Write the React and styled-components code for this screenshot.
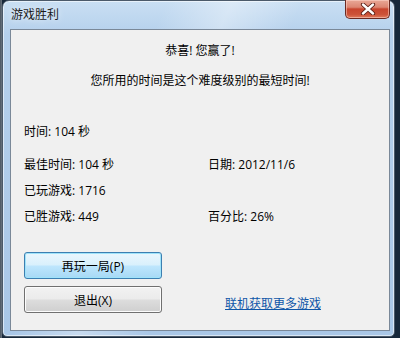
import React from 'react';
import styled, { createGlobalStyle } from 'styled-components';

const GlobalStyle = createGlobalStyle`
    html, body {
        margin: 0;
        padding: 0;
        background: #17283a;
    }
    body {
        width: 400px;
        height: 338px;
        overflow: hidden;
        font-family: "Open Sans", "Noto Sans CJK SC", sans-serif;
    }
`;

const Desktop = styled.div`
    width: 400px;
    height: 338px;
    display: flex;
    align-items: flex-start;
    background: linear-gradient(90deg, #4a5560 0, #6a7480 2px, #17283a 2px);
`;

const Window = styled.div`
    width: 393px;
    height: 337px;
    box-sizing: border-box;
    margin-left: 2px;
    padding: 0 4px 5px 7px;
    display: flex;
    flex-direction: column;
    border: 1px solid #4b5a6a;
    border-radius: 7px 7px 5px 5px;
    background:
        linear-gradient(115deg, rgba(255,255,255,0) 30%, rgba(255,255,255,0.35) 42%, rgba(255,255,255,0) 55%),
        linear-gradient(180deg, #c9dff3 0%, #b5d0ec 10%, #a9c7e7 100%);
    box-shadow: inset 0 0 0 1px rgba(255,255,255,0.55);
`;

const TitleBar = styled.div`
    height: 28px;
    flex: none;
    display: flex;
    justify-content: space-between;
    align-items: flex-start;
`;

const Title = styled.div`
    margin-top: 5px;
    padding-left: 1px;
    font-size: 12px;
    line-height: 17px;
    color: #1b1b1b;
    text-shadow: 0 0 6px rgba(255,255,255,0.9);
`;

const CloseButton = styled.div`
    width: 45px;
    height: 19px;
    box-sizing: border-box;
    margin-top: -1px;
    margin-right: 0;
    border: 1px solid #6b2a22;
    border-top: none;
    border-radius: 0 0 5px 5px;
    display: flex;
    align-items: center;
    justify-content: center;
    background: linear-gradient(180deg, #e9a897 0%, #dc8672 40%, #c8452e 50%, #cc5238 80%, #e07a5c 100%);
    box-shadow: inset 0 0 0 1px rgba(255,220,210,0.5);
`;

const Client = styled.div`
    flex: 1;
    display: flex;
    flex-direction: column;
    background: #f0f0f0;
    border: 1px solid #7a8898;
    padding: 0 0 0 13px;
    font-size: 12px;
    line-height: 16px;
    color: #000;
`;

const Message = styled.div`
    text-align: center;
    margin-right: 13px;
    margin-top: ${({ gap }) => gap}px;
`;

const Line = styled.div`
    margin-top: ${({ gap }) => gap}px;
`;

const StatsGrid = styled.div`
    margin-top: 17px;
    display: grid;
    grid-template-columns: 184px 1fr;
    row-gap: 10px;
`;

const Footer = styled.div`
    margin-top: 27px;
    display: flex;
    align-items: flex-end;
`;

const ButtonColumn = styled.div`
    display: flex;
    flex-direction: column;
    gap: 7px;
    width: 138px;
`;

const Button = styled.button`
    height: 27px;
    box-sizing: border-box;
    padding: 0;
    font-family: inherit;
    font-size: 12px;
    color: #000;
    border-radius: 3px;
    cursor: pointer;
    border: 1px solid ${({ primary }) => (primary ? '#3c7fb1' : '#707070')};
    background: ${({ primary }) =>
        primary
            ? 'linear-gradient(180deg, #eaf6fd 0%, #d9f0fc 48%, #bee6fd 52%, #a7d9f5 100%)'
            : 'linear-gradient(180deg, #f2f2f2 0%, #ebebeb 48%, #dddddd 52%, #cfcfcf 100%)'};
    box-shadow: inset 0 0 0 1px ${({ primary }) => (primary ? '#9fe3fa' : '#fcfcfc')};
`;

const MoreLink = styled.a`
    margin-left: 63px;
    margin-bottom: 1px;
    line-height: 16px;
    color: #0f56a8;
    text-decoration: underline;
    cursor: pointer;
`;

const CloseIcon = () => (
    <svg width="16" height="12" viewBox="0 0 16 12">
        <path
            d="M3 1.5 L13 10.5 M13 1.5 L3 10.5"
            stroke="#5a1d14"
            strokeWidth="4.2"
            strokeLinecap="round"
        />
        <path
            d="M3 1.5 L13 10.5 M13 1.5 L3 10.5"
            stroke="#ffffff"
            strokeWidth="2.4"
            strokeLinecap="round"
        />
    </svg>
);

export default function App() {
    return (
        <Desktop>
            <GlobalStyle />
            <Window>
                <TitleBar>
                    <Title>游戏胜利</Title>
                    <CloseButton>
                        <CloseIcon />
                    </CloseButton>
                </TitleBar>
                <Client>
                    <Message gap={13}>恭喜! 您赢了!</Message>
                    <Message gap={14}>您所用的时间是这个难度级别的最短时间!</Message>
                    <Line gap={35}>时间: 104 秒</Line>
                    <StatsGrid>
                        <div>最佳时间: 104 秒</div>
                        <div>日期: 2012/11/6</div>
                        <div>已玩游戏: 1716</div>
                        <div />
                        <div>已胜游戏: 449</div>
                        <div>百分比: 26%</div>
                    </StatsGrid>
                    <Footer>
                        <ButtonColumn>
                            <Button primary>再玩一局(P)</Button>
                            <Button>退出(X)</Button>
                        </ButtonColumn>
                        <MoreLink>联机获取更多游戏</MoreLink>
                    </Footer>
                </Client>
            </Window>
        </Desktop>
    );
}
